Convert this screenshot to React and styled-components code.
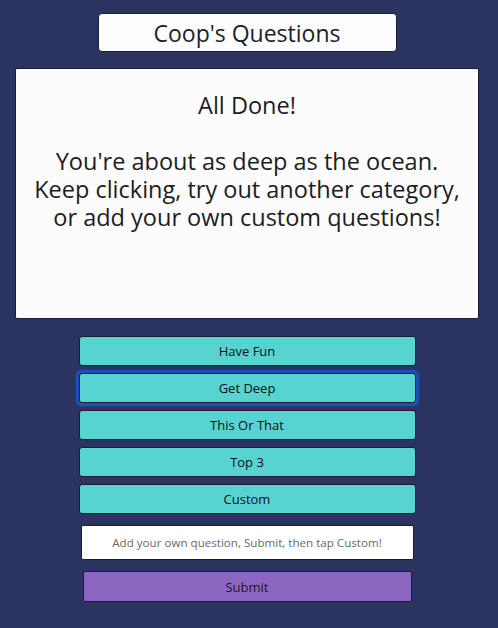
import React, { useState } from "react";
import styled, { createGlobalStyle } from "styled-components";

const GlobalStyle = createGlobalStyle`
  body {
    margin: 0;
    background-color: #2b3461;
    font-family: "Open Sans", "Noto Sans", sans-serif;
  }
`;

const categories = ["Have Fun", "Get Deep", "This Or That", "Top 3", "Custom"];

const App = () => {
  const [active, setActive] = useState("Get Deep");
  const [question, setQuestion] = useState("");

  return (
    <Page>
      <GlobalStyle />
      <Title>Coop's Questions</Title>
      <Card>
        <CardText>All Done!</CardText>
        <CardText>&nbsp;</CardText>
        <CardText>
          You're about as deep as the ocean.
          <br />
          Keep clicking, try out another category,
          <br />
          or add your own custom questions!
        </CardText>
      </Card>
      <Buttons>
        {categories.map((c) => (
          <CategoryButton
            key={c}
            $focused={active === c}
            onClick={() => setActive(c)}
          >
            {c}
          </CategoryButton>
        ))}
      </Buttons>
      <form onSubmit={(e) => e.preventDefault()}>
        <FormBox>
          <QuestionInput
            type="text"
            value={question}
            onChange={(e) => setQuestion(e.target.value)}
            placeholder="Add your own question, Submit, then tap Custom!"
          />
          <SubmitButton type="submit">Submit</SubmitButton>
        </FormBox>
      </form>
    </Page>
  );
};

const Page = styled.main`
  display: flex;
  flex-direction: column;
  align-items: center;
  padding: 13px 19px 26px 15px;
`;

const Title = styled.h1`
  box-sizing: border-box;
  width: 299px;
  height: 39px;
  margin: 0;
  display: flex;
  align-items: center;
  justify-content: center;
  background-color: #fdfdfd;
  border: 1px solid #1b1e2c;
  border-radius: 4px;
  font-size: 23px;
  font-weight: 400;
  color: #1c1f2b;
`;

const Card = styled.section`
  box-sizing: border-box;
  width: 464px;
  height: 251px;
  margin-top: 16px;
  padding-top: 22px;
  background-color: #fcfcfc;
  border: 1px solid #1b1e2c;
  border-radius: 2px;
  text-align: center;
`;

const CardText = styled.p`
  margin: 0;
  font-size: 23.5px;
  line-height: 28px;
  color: #1c1c22;
`;

const Buttons = styled.div`
  display: flex;
  flex-direction: column;
  gap: 7px;
  margin-top: 17px;
`;

const CategoryButton = styled.button`
  box-sizing: border-box;
  width: 337px;
  height: 30px;
  background-color: #57d3d1;
  border: 1px solid #1b1e2c;
  border-radius: 3px;
  font-family: inherit;
  font-size: 13px;
  color: #111;
  cursor: pointer;
  box-shadow: ${(p) =>
    p.$focused ? "0 0 0 3px #1e4fb6, 0 0 2px 4px rgba(30, 79, 182, 0.4)" : "none"};
`;

const FormBox = styled.div`
  display: flex;
  flex-direction: column;
  align-items: center;
  gap: 11px;
  margin-top: 11px;
`;

const QuestionInput = styled.input`
  box-sizing: border-box;
  width: 333px;
  height: 35px;
  background-color: #fff;
  border: 1px solid #1b1e2c;
  border-radius: 2px;
  text-align: center;
  font-family: inherit;
  font-size: 11.6px;

  &::placeholder {
    color: #6a6a6a;
  }
`;

const SubmitButton = styled.button`
  box-sizing: border-box;
  width: 329px;
  height: 31px;
  background-color: #8c66c0;
  border: 1px solid #1b1e2c;
  border-radius: 2px;
  font-family: inherit;
  font-size: 13px;
  color: #1d1a2a;
  cursor: pointer;
`;

export default App;
